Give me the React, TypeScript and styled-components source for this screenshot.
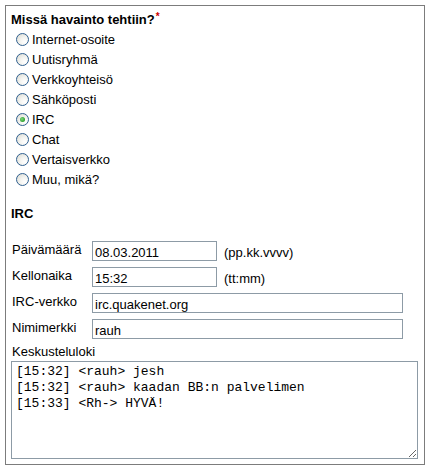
import React from "react";
import styled, { createGlobalStyle } from "styled-components";

const GlobalStyle = createGlobalStyle`
  body {
    margin: 0;
    background: #fff;
    font-family: "Liberation Sans", Arial, sans-serif;
    color: #000;
  }
`;

const Frame = styled.form`
  box-sizing: border-box;
  margin: 5px;
  width: 420px;
  height: 460px;
  border: 1px solid #7c7c7c;
  padding: 6px 5px 0 5px;
  font-size: 13px;
  line-height: 15px;
`;

const Heading = styled.div<{ $gap?: number }>`
  font-weight: bold;
  margin-top: ${(p) => p.$gap ?? 0}px;
`;

const Required = styled.span`
  color: #c00;
  font-size: 10px;
  vertical-align: top;
  line-height: 10px;
  margin-left: 1px;
`;

const RadioList = styled.div`
  margin-top: 2px;
  display: flex;
  flex-direction: column;
`;

const RadioRow = styled.label`
  display: flex;
  align-items: center;
  height: 20px;
`;

const Radio = styled.input`
  appearance: none;
  box-sizing: border-box;
  margin: 0 3px 0 5px;
  width: 13px;
  height: 13px;
  border-radius: 50%;
  border: 1px solid #2f5f8f;
  background: radial-gradient(circle at 70% 70%, #ffffff 0%, #f4f4f0 40%, #d6d6ce 100%);
  display: grid;
  place-items: center;

  &:checked::after {
    content: "";
    width: 5px;
    height: 5px;
    border-radius: 50%;
    background: radial-gradient(circle at 40% 40%, #7fd87f 0%, #2ca02c 70%, #1f7d1f 100%);
  }
`;

const Fields = styled.div`
  margin-top: 20px;
  display: grid;
  grid-template-columns: 81px 1fr;
  row-gap: 6px;
  align-items: start;
`;

const FieldLabel = styled.label`
  padding-left: 1px;
  padding-top: 1px;
`;

const FieldLine = styled.div`
  display: flex;
  align-items: flex-start;
  gap: 7px;
`;

const TextInput = styled.input<{ $width: number }>`
  box-sizing: border-box;
  width: ${(p) => p.$width}px;
  height: 20px;
  margin: 0;
  padding: 3px 2px 0 2px;
  border: 1px solid #8d9ba6;
  font-family: "Liberation Sans", Arial, sans-serif;
  font-size: 13px;
  line-height: 15px;
  color: #000;
  outline: none;
`;

const Hint = styled.span`
  padding-top: 4px;
`;

const LogLabel = styled.label`
  display: block;
  margin-top: 5px;
  padding-left: 1px;
`;

const Log = styled.textarea`
  box-sizing: border-box;
  display: block;
  margin: 2px 0 0 0;
  width: 407px;
  height: 98px;
  padding: 2px 4px;
  border: 1px solid #8d9ba6;
  font-family: "Liberation Mono", "Courier New", monospace;
  font-size: 13px;
  line-height: 16px;
  color: #000;
  outline: none;
`;

const places = [
  "Internet-osoite",
  "Uutisryhmä",
  "Verkkoyhteisö",
  "Sähköposti",
  "IRC",
  "Chat",
  "Vertaisverkko",
  "Muu, mikä?",
];

const logText = `[15:32] <rauh> jesh
[15:32] <rauh> kaadan BB:n palvelimen
[15:33] <Rh-> HYVÄ!`;

export default function App() {
  return (
    <>
      <GlobalStyle />
      <Frame>
        <Heading>
          Missä havainto tehtiin?<Required>*</Required>
        </Heading>
        <RadioList>
          {places.map((place) => (
            <RadioRow key={place}>
              <Radio type="radio" name="place" defaultChecked={place === "IRC"} />
              {place}
            </RadioRow>
          ))}
        </RadioList>

        <Heading $gap={17}>IRC</Heading>

        <Fields>
          <FieldLabel>Päivämäärä</FieldLabel>
          <FieldLine>
            <TextInput $width={125} defaultValue="08.03.2011" />
            <Hint>(pp.kk.vvvv)</Hint>
          </FieldLine>

          <FieldLabel>Kellonaika</FieldLabel>
          <FieldLine>
            <TextInput $width={125} defaultValue="15:32" />
            <Hint>(tt:mm)</Hint>
          </FieldLine>

          <FieldLabel>IRC-verkko</FieldLabel>
          <FieldLine>
            <TextInput $width={311} defaultValue="irc.quakenet.org" />
          </FieldLine>

          <FieldLabel>Nimimerkki</FieldLabel>
          <FieldLine>
            <TextInput $width={311} defaultValue="rauh" />
          </FieldLine>
        </Fields>

        <LogLabel>Keskusteluloki</LogLabel>
        <Log defaultValue={logText} />
      </Frame>
    </>
  );
}
